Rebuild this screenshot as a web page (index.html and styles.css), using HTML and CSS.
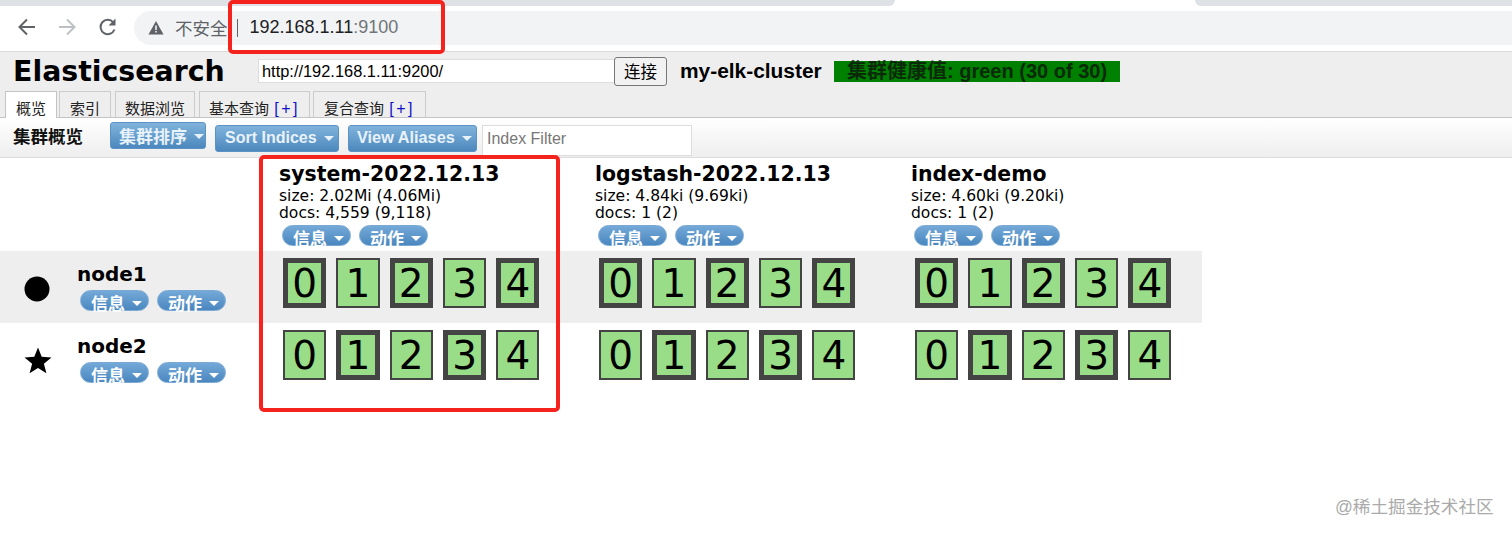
FILE: index.html
```html
<!DOCTYPE html>
<html lang="zh">
<head>
<meta charset="utf-8">
<title>Elasticsearch</title>
<link rel="stylesheet" href="styles.css">
</head>
<body>
<div class="tabstrip"><div class="strip-left"></div><div class="strip-active"></div><div class="strip-right"></div></div>
<div class="toolbar">
  <svg class="nav-icon" width="20" height="20" viewBox="0 0 20 20"><path d="M18 10H3M10 2.5 2.5 10l7.5 7.5" fill="none" stroke="#5f6368" stroke-width="2"/></svg>
  <svg class="nav-icon" width="20" height="20" viewBox="0 0 20 20"><path d="M2 10h15M10 2.5 17.5 10 10 17.5" fill="none" stroke="#bdc1c6" stroke-width="2"/></svg>
  <svg class="nav-icon" width="20" height="20" viewBox="0 0 20 20"><path d="M16.5 12.5a7.2 7.2 0 1 1-1.2-7.2" fill="none" stroke="#5f6368" stroke-width="2"/><path d="M17.5 1.5v7h-7z" fill="#5f6368"/></svg>
  <div class="omnibox">
    <svg width="16" height="15" viewBox="0 0 16 15"><path d="M8 1 15.500 14.500H.5z" fill="#5f6368"/><path d="M7.200 5.500h1.600v4.500H7.200zM7.200 11h1.600v1.600H7.200z" fill="#f1f3f4"/></svg>
    <span class="insecure">不安全</span><span class="divider"></span>
    <span class="host">192.168.1.11<span class="port">:9100</span></span>
  </div>
</div>
<div class="es-head">
  <h1 class="brand">Elasticsearch</h1>
  <input class="uri" value="http://192.168.1.11:9200/">
  <button class="connect">连接</button>
  <span class="cluster">my-elk-cluster</span>
  <span class="health">集群健康值: green (30 of 30)</span>
</div>
<div class="tabs">
  <span class="tab active t1">概览</span>
  <span class="tab t2">索引</span>
  <span class="tab t3">数据浏览</span>
  <span class="tab t4">基本查询 <b class="plus">[+]</b></span>
  <span class="tab t5">复合查询 <b class="plus">[+]</b></span>
</div>
<div class="overview">
  <span class="ov-title">集群概览</span>
  <span class="btn sort">集群排序<i class="caret"></i></span>
  <span class="btn si">Sort Indices<i class="caret"></i></span>
  <span class="btn va">View Aliases<i class="caret"></i></span>
  <input class="filter" placeholder="Index Filter">
</div>
<div class="grid head-row">
  <div></div>
  <div class="index"><div class="iname">system-2022.12.13</div><div class="stat">size: 2.02Mi (4.06Mi)</div><div class="stat">docs: 4,559 (9,118)</div><div class="pills"><span class="pill">信息<i class="caret"></i></span><span class="pill">动作<i class="caret"></i></span></div></div>
  <div class="index"><div class="iname">logstash-2022.12.13</div><div class="stat">size: 4.84ki (9.69ki)</div><div class="stat">docs: 1 (2)</div><div class="pills"><span class="pill">信息<i class="caret"></i></span><span class="pill">动作<i class="caret"></i></span></div></div>
  <div class="index"><div class="iname">index-demo</div><div class="stat">size: 4.60ki (9.20ki)</div><div class="stat">docs: 1 (2)</div><div class="pills"><span class="pill">信息<i class="caret"></i></span><span class="pill">动作<i class="caret"></i></span></div></div>
</div>
<div class="grid node-row shaded">
  <div class="node">
    <svg class="node-icon" width="28" height="28" viewBox="0 0 28 28"><circle cx="13" cy="14" r="12.500"/></svg>
    <div class="node-info"><div class="nname">node1</div><div class="pills"><span class="pill">信息<i class="caret"></i></span><span class="pill">动作<i class="caret"></i></span></div></div>
  </div>
  <div class="shards"><span class="shard p">0</span><span class="shard">1</span><span class="shard p">2</span><span class="shard">3</span><span class="shard p">4</span></div>
  <div class="shards"><span class="shard p">0</span><span class="shard">1</span><span class="shard p">2</span><span class="shard">3</span><span class="shard p">4</span></div>
  <div class="shards"><span class="shard p">0</span><span class="shard">1</span><span class="shard p">2</span><span class="shard">3</span><span class="shard p">4</span></div>
</div>
<div class="grid node-row">
  <div class="node">
    <svg class="node-icon" width="28" height="28" viewBox="0 0 28 28"><path d="M14 .5l3.700 9.300 9.800.6-7.600 6.300 2.500 9.600L14 21l-8.400 5.300 2.500-9.600L.5 10.400l9.800-.6z"/></svg>
    <div class="node-info"><div class="nname">node2</div><div class="pills"><span class="pill">信息<i class="caret"></i></span><span class="pill">动作<i class="caret"></i></span></div></div>
  </div>
  <div class="shards"><span class="shard">0</span><span class="shard p">1</span><span class="shard">2</span><span class="shard p">3</span><span class="shard">4</span></div>
  <div class="shards"><span class="shard">0</span><span class="shard p">1</span><span class="shard">2</span><span class="shard p">3</span><span class="shard">4</span></div>
  <div class="shards"><span class="shard">0</span><span class="shard p">1</span><span class="shard">2</span><span class="shard p">3</span><span class="shard">4</span></div>
</div>
<div class="mark mark-url"></div>
<div class="mark mark-index"></div>
<div class="watermark">@稀土掘金技术社区</div>
</body>
</html>
```
FILE: styles.css
```css
* { box-sizing: border-box; }
html, body { margin: 0; height: 535px; overflow: hidden; background: #fff; }
body { position: relative; font-family: "Liberation Sans", "Noto Sans CJK SC", sans-serif; color: #000; }

.tabstrip { display: flex; height: 6px; background: #fff; }
.strip-left { width: 895px; background: #dee1e6; border-bottom-right-radius: 6px; }
.strip-active { width: 300px; }
.strip-right { flex: 1; background: #dee1e6; border-bottom-left-radius: 6px; }

.toolbar { display: flex; align-items: center; height: 45px; padding: 0 0 0 17px; background: #fff; }
.toolbar .nav-icon { flex: none; margin-right: 20px; margin-top: -3px; }
.toolbar .nav-icon:nth-child(2) { margin-right: 21px; }
.toolbar .nav-icon:nth-child(3) { margin-right: 16px; }
.omnibox { flex: 1; display: flex; align-items: center; height: 34px; margin-top: -1px; padding: 0 0 1px 14px; background: #f1f3f4; border-radius: 17px 0 0 17px; }
.insecure { margin-left: 11px; font-size: 17.500px; color: #5f6368; }
.divider { width: 1px; height: 18px; margin: 0 12px 0 9px; background: #5f6368; }
.host { font-size: 18px; color: #202124; }
.port { color: #70757a; }

.es-head { display: flex; align-items: center; height: 41px; padding: 0 0 2px 13px; background: #eee; border-top: 1px solid #d9d9d9; }
.brand { margin: 0; width: 245px; font: bold 28.400px "DejaVu Sans", sans-serif; }
.uri { width: 356px; height: 24px; padding: 0 3px; border: 1px solid #ddd; border-width: 1px 0 1px 1px; background: #fff; font: 16.400px "Liberation Sans", sans-serif; color: #000; outline: 0; }
.connect { width: 53px; height: 29px; padding: 0; border: 1px solid #777; border-radius: 3px; background: #f2f2f2; font: 16.500px "Noto Sans CJK SC", sans-serif; }
.cluster { margin-left: 13px; width: 154px; font-size: 20.900px; font-weight: bold; white-space: nowrap; }
.health { display: block; width: 286px; height: 21px; padding-left: 13px; background: #008000; color: #0a2a0a; font-size: 20px; font-weight: bold; line-height: 21px; white-space: nowrap; }

.tabs { display: flex; align-items: flex-end; height: 26px; padding-left: 5px; background: #eee; border-bottom: 1px solid #c4c4c4; }
.tab { display: block; height: 26px; border: 1px solid #ccc; border-bottom: 0; text-align: center; font-size: 15px; line-height: 33px; color: #222; white-space: nowrap; overflow: hidden; }
.tab.active { height: 27px; margin-bottom: -1px; background: #fff; border-color: #c4c4c4; position: relative; }
.t1 { width: 52px; margin-right: 2px; }
.t2 { width: 52px; margin-right: 4px; }
.t3 { width: 80px; margin-right: 4px; }
.t4 { width: 111px; margin-right: 3px; }
.t5 { width: 113px; }
.plus { font-weight: normal; font-size: 16px; color: #11c; letter-spacing: 2.500px; margin-left: 1px; }

.overview { display: flex; align-items: flex-start; height: 40px; padding: 7px 0 0 13px; background: linear-gradient(#fff, #eee); border-bottom: 1px solid #ddd; }
.ov-title { width: 97px; font-size: 17.500px; font-weight: bold; line-height: 25px; color: #111; }
.btn { display: flex; align-items: center; height: 27px; padding: 0 0 2px 9px; border: 1px solid #5b93c6; border-radius: 3px; background: linear-gradient(#80b3dc, #4c88bd); color: #e8f2fa; font-size: 16px; font-weight: bold; white-space: nowrap; }
.sort { width: 96px; margin-top: -3px; margin-right: 9px; padding: 0 0 0 8px; font-size: 17px; }
.si { width: 124px; margin-right: 9px; }
.va { width: 129px; margin-right: 5px; padding-left: 8px; font-size: 16.300px; }
.caret { display: inline-block; width: 0; height: 0; margin-left: 7px; margin-top: 2px; border: 5px solid transparent; border-top-color: #e8f2fa; border-bottom: 0; }
.filter { width: 210px; height: 31px; padding: 0 4px 3px; border: 1px solid #ddd; background: #fff; font: 16px "Liberation Sans", sans-serif; outline: 0; }
.filter::placeholder { color: #777; opacity: 1; }

.grid { display: grid; grid-template-columns: 275px 316px 316px 295px; width: 1202px; }
.head-row { height: 93px; }
.index { padding: 5px 0 0 4px; }
.iname { font: bold 20.460px/22px "DejaVu Sans", sans-serif; }
.stat { font: 15.550px/17px "DejaVu Sans", sans-serif; }
.stat:nth-child(2) { margin-top: 3px; }
.pills { display: flex; gap: 8px; }
.index .pills { margin: 3px 0 0 3px; }
.pill { display: block; width: 69px; height: 21px; padding-left: 10px; border: 1px solid #7aaad4; border-radius: 11px; background: linear-gradient(#74a9d8, #4a87bf); color: #fff; font-size: 17px; font-weight: bold; line-height: 28px; white-space: nowrap; }
.pill .caret { margin-left: 7px; margin-top: 0; vertical-align: 4px; border-top-color: #fff; }

.node-row { height: 72px; }
.shaded { background: #eee; }
.node { display: flex; align-items: flex-start; padding: 24px 0 0 24px; }
.node-icon { flex: none; }
.node-info { margin: -12px 0 0 25px; }
.nname { font: bold 20px/22px "DejaVu Sans", sans-serif; }
.node .pills { margin: 5px 0 0 3px; }

.shards { display: flex; gap: 10px; padding: 7px 0 0 8px; }
.shard { display: block; width: 43.300px; height: 50px; border: 2px solid #444; background: #99dd88; font: 39px/48px "DejaVu Sans", sans-serif; text-align: center; color: #000; }
.shard.p { border-width: 5px; line-height: 42px; }

.mark { position: absolute; border: 4px solid #f5231d; border-radius: 5px; }
.mark-url { left: 228px; top: 0; width: 217px; height: 54px; }
.mark-index { left: 259px; top: 155px; width: 301px; height: 257px; }
.watermark { position: absolute; left: 1335px; top: 495px; font-size: 17.600px; line-height: 24px; color: #aaa; white-space: nowrap; }
```
